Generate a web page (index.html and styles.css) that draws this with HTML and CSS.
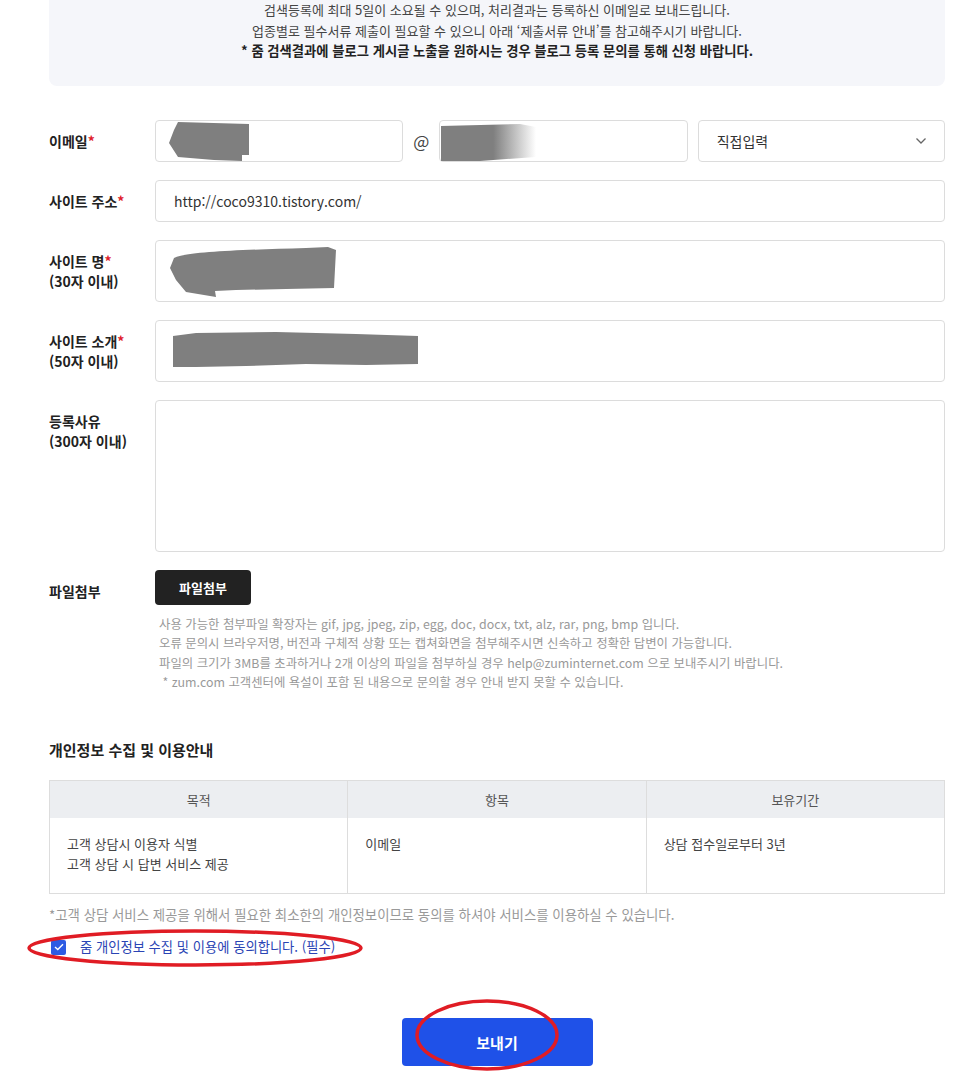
FILE: index.html
```html
<!DOCTYPE html>
<html lang="ko">
<head>
    <meta charset="UTF-8">
    <meta name="viewport" content="width=device-width, initial-scale=1.0">
    <title>검색등록 신청</title>
    <link rel="stylesheet" href="styles.css">
</head>
<body>
    <div class="wrap">
        <div class="notice">
            <p>검색등록에 최대 5일이 소요될 수 있으며, 처리결과는 등록하신 이메일로 보내드립니다.</p>
            <p>업종별로 필수서류 제출이 필요할 수 있으니 아래 ‘제출서류 안내’를 참고해주시기 바랍니다.</p>
            <p class="strong">* 줌 검색결과에 블로그 게시글 노출을 원하시는 경우 블로그 등록 문의를 통해 신청 바랍니다.</p>
        </div>

        <div class="form">
            <div class="row">
                <div class="label">이메일<em>*</em></div>
                <div class="field email">
                    <div class="box">
                        <svg class="redact" width="95" height="42" viewBox="0 0 95 42"><polygon points="22,1 93,3 93,34 86,34 86,40 58,39 22,36 13,22 18,9" fill="#7f7f7f"/></svg>
                    </div>
                    <span class="at">@</span>
                    <div class="box">
                        <svg class="redact" width="110" height="42" viewBox="0 0 110 42"><defs><linearGradient id="fade" x1="0" x2="1"><stop offset="0.55" stop-color="#7f7f7f"/><stop offset="1" stop-color="#7f7f7f" stop-opacity="0"/></linearGradient></defs><polygon points="1,5 80,3 96,6 96,36 40,40 1,40" fill="url(#fade)"/></svg>
                    </div>
                    <div class="box select">
                        <span>직접입력</span>
                        <svg width="12" height="8" viewBox="0 0 12 8"><path d="M1.5 1.5 L6 6 L10.5 1.5" fill="none" stroke="#666" stroke-width="1.3"/></svg>
                    </div>
                </div>
            </div>

            <div class="row">
                <div class="label">사이트 주소<em>*</em></div>
                <div class="field"><div class="box">http://coco9310.tistory.com/</div></div>
            </div>

            <div class="row">
                <div class="label">사이트 명<em>*</em><br>(30자 이내)</div>
                <div class="field">
                    <div class="box tall">
                        <svg class="redact" width="200" height="62" viewBox="0 0 200 62"><path d="M18,18 C30,12 80,10 150,8 L172,7 L180,10 L178,48 L130,49 L80,50 L59,51 L60,57 L30,52 L20,40 L14,28 Z" fill="#7f7f7f"/></svg>
                    </div>
                </div>
            </div>

            <div class="row">
                <div class="label">사이트 소개<em>*</em><br>(50자 이내)</div>
                <div class="field">
                    <div class="box tall">
                        <svg class="redact" width="270" height="62" viewBox="0 0 270 62"><path d="M17,16 L40,13 L120,12 L200,14 L262,16 L262,44 L210,45 L150,44 L90,46 L40,47 L17,47 Z" fill="#7f7f7f"/></svg>
                    </div>
                </div>
            </div>

            <div class="row">
                <div class="label">등록사유<br>(300자 이내)</div>
                <div class="field"><div class="box area"></div></div>
            </div>

            <div class="row">
                <div class="label">파일첨부</div>
                <div class="field">
                    <button class="btn-file">파일첨부</button>
                    <ul class="file-notes">
                        <li>사용 가능한 첨부파일 확장자는 gif, jpg, jpeg, zip, egg, doc, docx, txt, alz, rar, png, bmp 입니다.</li>
                        <li>오류 문의시 브라우저명, 버전과 구체적 상황 또는 캡쳐화면을 첨부해주시면 신속하고 정확한 답변이 가능합니다.</li>
                        <li>파일의 크기가 3MB를 초과하거나 2개 이상의 파일을 첨부하실 경우 help@zuminternet.com 으로 보내주시기 바랍니다.</li>
                        <li>&nbsp;* zum.com 고객센터에 욕설이 포함 된 내용으로 문의할 경우 안내 받지 못할 수 있습니다.</li>
                    </ul>
                </div>
            </div>
        </div>

        <h2>개인정보 수집 및 이용안내</h2>

        <table class="privacy">
            <thead>
                <tr><th>목적</th><th>항목</th><th>보유기간</th></tr>
            </thead>
            <tbody>
                <tr>
                    <td>고객 상담시 이용자 식별<br>고객 상담 시 답변 서비스 제공</td>
                    <td>이메일</td>
                    <td>상담 접수일로부터 3년</td>
                </tr>
            </tbody>
        </table>

        <p class="privacy-note">*고객 상담 서비스 제공을 위해서 필요한 최소한의 개인정보이므로 동의를 하셔야 서비스를 이용하실 수 있습니다.</p>

        <label class="agree">
            <span class="check"><svg width="10" height="8" viewBox="0 0 10 8"><path d="M1 4 L3.8 6.6 L9 1.2" fill="none" stroke="#fff" stroke-width="1.4"/></svg></span>
            줌 개인정보 수집 및 이용에 동의합니다. (필수)
        </label>

        <div class="submit">
            <button class="btn-send">보내기</button>
        </div>
    </div>

    <!-- 빨간 표시 -->
    <svg class="marks" width="976" height="1085" viewBox="0 0 976 1085">
        <ellipse cx="195" cy="948" rx="166" ry="17" fill="none" stroke="#e01c24" stroke-width="3.5"/>
        <ellipse cx="487" cy="1035" rx="70" ry="34" fill="none" stroke="#e01c24" stroke-width="3.5"/>
    </svg>
</body>
</html>
```

FILE: styles.css
```css
body {
    margin: 0;
    font-family: 'Noto Sans CJK KR', 'Noto Sans', sans-serif;
    color: #222;
    background: #fff;
    position: relative;
}

.wrap {
    width: 896px;
    margin-left: 49px;
    padding-bottom: 20px;
}

.notice {
    background: #f5f6fa;
    border-radius: 0 0 8px 8px;
    text-align: center;
    padding: 0 0 24px;
    font-size: 13px;
    line-height: 20.5px;
    color: #444;
}

.notice p {
    margin: 0;
}

.notice .strong {
    font-weight: bold;
    color: #222;
    font-size: 13.3px;
}

.form {
    margin-top: 34px;
}

.row {
    display: flex;
    margin-bottom: 18px;
}

.label {
    width: 106px;
    flex-shrink: 0;
    padding-top: 11px;
    font-size: 14px;
    font-weight: bold;
    line-height: 20px;
    color: #222;
}

.label em {
    font-style: normal;
    color: #e0202a;
}

.field {
    flex: 1;
}

.field.email {
    display: flex;
    align-items: center;
}

.box {
    position: relative;
    box-sizing: border-box;
    height: 42px;
    border: 1px solid #dcdcdc;
    border-radius: 4px;
    padding: 0 18px;
    font-size: 14px;
    line-height: 40px;
    color: #333;
}

.email .box {
    flex: 1;
}

.email .at {
    width: 36px;
    text-align: center;
    font-size: 17px;
    color: #444;
}

.email .select {
    margin-left: 10px;
    display: flex;
    align-items: center;
    justify-content: space-between;
    padding-right: 17px;
}

.box.tall {
    height: 62px;
}

.box.area {
    height: 152px;
}

.redact {
    position: absolute;
    left: 0;
    top: 0;
}

.tall .redact {
    top: -1px;
}

.btn-file {
    font-family: inherit;
    background: #222;
    color: #fff;
    border: none;
    border-radius: 4px;
    width: 96px;
    height: 35px;
    font-size: 13px;
    font-weight: bold;
    cursor: pointer;
}

.file-notes {
    list-style: none;
    margin: 10px 0 0 4px;
    padding: 0;
    font-size: 12.4px;
    line-height: 19.5px;
    color: #999;
}

h2 {
    margin: 46px 0 19px;
    font-size: 15px;
    font-weight: bold;
    line-height: 22px;
    color: #222;
}

.privacy {
    width: 100%;
    border-collapse: collapse;
    table-layout: fixed;
    border: 1px solid #ddd;
    font-size: 13px;
}

.privacy th {
    background: #eceef1;
    height: 37px;
    font-weight: normal;
    color: #555;
    border-left: 1px solid #ddd;
    padding: 0;
}

.privacy td {
    height: 76px;
    box-sizing: border-box;
    vertical-align: top;
    padding: 16px 17px;
    line-height: 20px;
    color: #444;
    border-left: 1px solid #ddd;
}

.privacy-note {
    margin: 11px 0 0;
    font-size: 13.4px;
    line-height: 18px;
    color: #999;
}

.agree {
    display: flex;
    align-items: center;
    margin: 15px 0 0 2px;
    font-size: 13.3px;
    line-height: 18px;
    color: #2a44b4;
}

.check {
    width: 15px;
    height: 15px;
    border-radius: 2px;
    background: #2d5be3;
    display: flex;
    align-items: center;
    justify-content: center;
    margin-right: 14px;
}

.submit {
    text-align: center;
    margin-top: 62px;
}

.btn-send {
    font-family: inherit;
    background: #1f51e8;
    color: #fff;
    border: none;
    border-radius: 4px;
    width: 191px;
    height: 48px;
    font-size: 15px;
    font-weight: bold;
    cursor: pointer;
}

.marks {
    position: absolute;
    top: 0;
    left: 0;
    pointer-events: none;
}
```
